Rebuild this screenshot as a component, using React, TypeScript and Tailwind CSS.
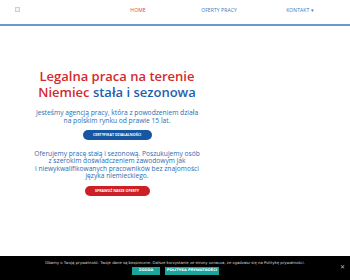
import React from "react";

export default function App() {
  return (
    <div className="w-[350px] h-[280px] bg-white relative overflow-hidden" style={{ fontFamily: '"Open Sans", "Liberation Sans", sans-serif' }}>
      {/* header */}
      <header className="h-[26px] border-b-2 border-[#6b98cf] flex items-center">
        <div className="w-[110px] pl-[15px] flex items-center">
          <div className="w-[5px] h-[5px] border border-[#cfcfcf] bg-[#f4f4f4] -mt-[6px]"></div>
        </div>
        <nav className="flex-1 flex items-center text-[5px] tracking-[0.1px] -mt-[3px]">
          <span className="w-[56px] text-center text-[#e04848]">HOME</span>
          <span className="w-[106px] text-center text-[#4373b8]">OFERTY PRACY</span>
          <span className="w-[56px] text-center text-[#4373b8]">KONTAKT ▾</span>
        </nav>
      </header>

      {/* hero */}
      <main className="w-[234px] flex flex-col items-center text-center pt-[42px]">
        <h1 className="text-[13px] leading-[16px] font-semibold text-[#d42a2f]">
          Legalna praca na terenie
          <br />
          Niemiec <span className="text-[#1f61ad]">stała i sezonowa</span>
        </h1>
        <p className="mt-[9px] text-[6.7px] leading-[8px] text-[#2d6cb2]">
          Jesteśmy agencją pracy, która z powodzeniem działa
          <br />
          na polskim rynku od prawie 15 lat.
        </p>
        <button className="mt-[5px] w-[69px] h-[10px] rounded-full bg-[#1757a1] text-white text-[3.6px] font-bold leading-none">
          CERTYFIKAT DZIAŁALNOŚCI
        </button>
        <p className="mt-[10px] text-[6.65px] leading-[7.4px] text-[#2d6cb2]">
          Oferujemy pracę stałą i sezonową. Poszukujemy osób
          <br />
          z szerokim doświadczeniem zawodowym jak
          <br />
          i niewykwalifikowanych pracowników bez znajomości
          <br />
          języka niemieckiego.
        </p>
        <button className="mt-[6px] w-[65px] h-[10px] rounded-full bg-[#cc1f26] text-white text-[3.6px] font-bold leading-none">
          SPRAWDŹ NASZE OFERTY
        </button>
      </main>

      {/* cookie bar */}
      <div className="absolute left-0 bottom-0 w-[350px] h-[24px] bg-black flex flex-col items-center pt-[4px]" style={{ fontFamily: '"DejaVu Sans", sans-serif' }}>
        <p className="text-[3.85px] leading-[5px] text-[#d8d8d8]">
          Dbamy o Twoją prywatność. Twoje dane są bezpieczne. Dalsze korzystanie ze strony oznacza, że zgadzasz się na Politykę prywatności.
        </p>
        <div className="mt-[2px] flex gap-[5px] ml-[1px]">
          <span className="w-[28px] h-[8px] bg-[#1aa59b] text-white text-[3.6px] font-bold flex items-center justify-center">ZGODA</span>
          <span className="w-[54px] h-[8px] bg-[#1aa59b] text-white text-[3.6px] font-bold flex items-center justify-center">POLITYKA PRYWATNOŚCI</span>
        </div>
        <span className="absolute right-[5px] top-[8px] text-[#bbbbbb] text-[6px] leading-none">✕</span>
      </div>
    </div>
  );
}
